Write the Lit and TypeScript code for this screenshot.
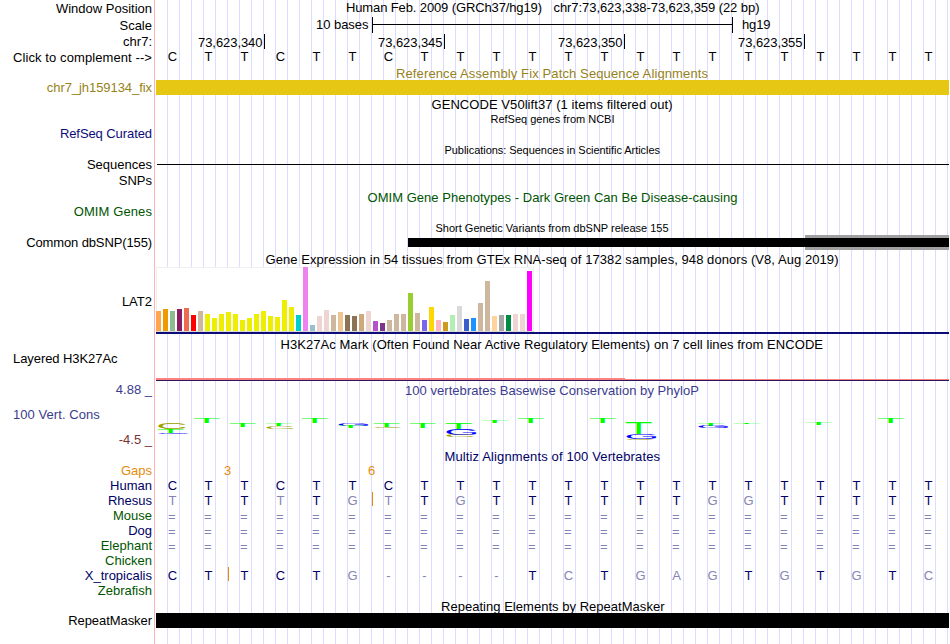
import { LitElement, html, svg, css, nothing, TemplateResult } from "lit";
import { customElement } from "lit/decorators.js";
import { classMap } from "lit/directives/class-map.js";
import { styleMap } from "lit/directives/style-map.js";

interface Title {
  text: string;
  from: number;
  to: number;
  base: number;
  small?: boolean;
}

interface Row {
  h: number;
  label?: string;
  tone?: string;
  dy?: number;
  left?: boolean;
  spacing?: number;
  titles?: Title[];
  body?: TemplateResult | TemplateResult[];
}

const STEP = 36;
const HUMAN = "CTTCTTCTTTTTTTTTTTTTTT";
const RHESUS = "TTTTTGTTGTTTTTTGGTTTTT";
const FROG = "CTTCTG----TCTGAGTGTGTC";
const UNALIGNED = "=".repeat(22);

const bases = (seq: string, base: number, compare = false) =>
  [...seq].map((ch, i) => {
    const off = compare && ch !== HUMAN[i];
    return svg`<text
      class=${classMap({ base: true, match: compare && !off, miss: off })}
      x=${(ch === "=" ? 171.8 : 172.5) + i * STEP} y=${base}>${ch}</text>`;
  });

const rect = (x: number, y: number, w: number, h: number, cls: string) =>
  svg`<rect class=${cls} x=${x} y=${y} width=${w} height=${h}></rect>`;

const t = (text: string, from: number, to: number, base: number, small = false): Title => ({
  text, from, to, base, small,
});

const TISSUES: [number, string][] = [
  [20, "#ffa54f"], [22, "#ee9a00"], [20, "#8fbc8f"], [22, "#8b1c62"], [23, "#ee6a50"],
  [16, "#ff0000"], [20, "#cdb79e"],
  ...[17, 13, 17, 19, 17, 11, 13, 17, 20, 15, 14, 31, 24].map((v): [number, string] => [v, "#eeee00"]),
  [16, "#00cdcd"], [64, "#ee82ee"], [6, "#9ac0cd"], [15, "#eed5d2"], [21, "#eed5d2"],
  [16, "#cdb79e"], [19, "#eec591"], [16, "#8b7355"], [15, "#8b7355"], [17, "#cdaa7d"],
  [20, "#eed5d2"], [10, "#b452cd"], [8, "#7a378b"], [11, "#cdb79e"], [17, "#cdb79e"],
  [17, "#cdb79e"], [38, "#9acd32"], [18, "#cdb79e"], [11, "#7a67ee"], [24, "#ffd700"],
  [11, "#ffb6c1"], [9, "#cd9b1d"], [16, "#b4eeb4"], [25, "#d9d9d9"], [12, "#3a5fcd"],
  [13, "#1e90ff"], [28, "#cdb79e"], [50, "#cdb79e"], [15, "#ffd39b"], [16, "#a6a6a6"],
  [16, "#008b45"], [17, "#eed5d2"], [17, "#eed5d2"], [60, "#ff00ff"],
];

/* Ink box of each logo letter in ems: left edge, width, overshoot below the baseline, height. */
const INK: Record<string, [number, number, number, number]> = {
  T: [0.021, 0.57, 0, 0.688],
  C: [0.05, 0.635, 0.01, 0.708],
  G: [0.05, 0.665, 0.01, 0.708],
};
const WIDTH: Record<string, number> = { T: 26, C: 27.5, G: 30 };
const OFFSET: Record<string, number> = { T: -14.2, C: -13.5, G: -13.5 };

/* Column, letter, top, bottom, measured from the top of the conservation row. */
const LOGO: [number, string, number, number][] = [
  [0, "C", 25.7, 32.3], [0, "T", 32, 36], [0, "G", 36, 37],
  [1, "T", 21, 26], [2, "T", 26, 30],
  [3, "T", 26, 29], [3, "C", 29, 32],
  [4, "T", 21, 26],
  [5, "G", 26, 29], [5, "T", 29, 31],
  [6, "T", 26, 30], [6, "C", 30, 31],
  [7, "T", 26, 31],
  [8, "T", 26, 32], [8, "G", 32, 38.3], [8, "C", 38, 40],
  [9, "T", 24, 26], [10, "T", 21, 26], [12, "T", 21, 26],
  [13, "T", 26, 37], [13, "G", 37, 42], [13, "C", 42, 43],
  [15, "T", 26, 29], [15, "G", 29, 31],
  [16, "T", 26, 27], [18, "T", 26, 28], [20, "T", 21, 26],
];

const logoLetter = ([col, ch, top, bottom]: [number, string, number, number]) => {
  const [l, w, over, h] = INK[ch];
  const sx = WIDTH[ch] / (w * 100);
  const sy = (bottom - top) / (h * 100);
  const x = 172 + col * STEP + OFFSET[ch] - l * 100 * sx;
  const y = bottom - over * 100 * sy;
  return svg`<text class="logo logo-${ch}" transform="translate(${x} ${y}) scale(${sx} ${sy})">${ch}</text>`;
};

const ROWS: Row[] = [
  { h: 17, label: "Window Position", dy: 1, titles: [
    t("Human Feb. 2009 (GRCh37/hg19)", 346, 542, 12),
    t("chr7:73,623,338-73,623,359 (22 bp)", 553.5, 759.5, 12),
  ] },
  { h: 17, label: "Scale", dy: 1,
    titles: [t("10 bases", 316, 368.5, 12), t("hg19", 742, 770.5, 12)],
    body: [rect(372, 7, 361, 1, "ink"), rect(372, 0, 1, 16, "ink"), rect(732, 0, 1, 16, "ink")] },
  { h: 15, label: "chr7:",
    titles: [340, 345, 350, 355].map((n, i) => t(`73,623,${n}`, 198 + i * 180, 262.5 + i * 180, 13)),
    body: [0, 1, 2, 3].map((i) => rect(264 + i * 180, 0, 1, 15, "ink")) },
  { h: 16, label: "Click to complement -->", dy: 1, spacing: 0.09, body: bases(HUMAN, 12) },
  { h: 15, tone: "gold", titles: [t("Reference Assembly Fix Patch Sequence Alignments", 396, 708, 13)] },
  { h: 15, label: "chr7_jh159134_fix", tone: "gold", spacing: -0.06, body: rect(156, 0, 793, 15, "patch") },
  { h: 16, titles: [t("GENCODE V50lift37 (1 items filtered out)", 431.5, 672.5, 14)] },
  { h: 14, titles: [t("RefSeq genes from NCBI", 490.5, 614.5, 12, true)] },
  { h: 16, label: "RefSeq Curated", tone: "blue", dy: 1, spacing: -0.08 },
  { h: 16, titles: [t("Publications: Sequences in Scientific Articles", 444.5, 660, 13, true)] },
  { h: 15, label: "Sequences", body: rect(157, 7, 792, 1, "ink") },
  { h: 17, label: "SNPs", dy: 1 },
  { h: 15, tone: "green", titles: [t("OMIM Gene Phenotypes - Dark Green Can Be Disease-causing", 367.5, 737.5, 13)] },
  { h: 15, label: "OMIM Genes", tone: "green", spacing: 0.1 },
  { h: 16, titles: [t("Short Genetic Variants from dbSNP release 155", 435.5, 668.5, 13, true)] },
  { h: 15, label: "Common dbSNP(155)", spacing: -0.12, body: [rect(805, 0, 144, 15, "shade"), rect(408, 3, 541, 9, "ink")] },
  { h: 16, titles: [t("Gene Expression in 54 tissues from GTEx RNA-seq of 17382 samples, 948 donors (V8, Aug 2019)", 265.5, 838.5, 14)] },
  { h: 70, label: "LAT2", dy: 28, body: [
    rect(156, 1, 378, 65, "frame"),
    rect(157, 2, 376, 63, "paper"),
    rect(156, 65, 378, 1, "floor"),
    ...TISSUES.map(([v, fill], i) => svg`<rect x=${156 + i * 7} y=${65 - v} width="5" height=${v} fill=${fill}></rect>`),
    rect(156, 66, 793, 2, "navy"),
  ] },
  { h: 15, titles: [t("H3K27Ac Mark (Often Found Near Active Regulatory Elements) on 7 cell lines from ENCODE", 280.5, 823, 13)] },
  { h: 31, label: "Layered H3K27Ac", left: true, spacing: -0.07, body: [
    rect(156, 27, 469, 2, "signal"), rect(625, 28, 324, 1, "signal"), rect(156, 29, 793, 1, "signal-base"),
  ] },
  { h: 15, label: "4.88 _", tone: "slate", titles: [t("100 vertebrates Basewise Conservation by PhyloP", 405, 699, 13)] },
  { h: 35, label: "100 Vert. Cons", tone: "slate", left: true, dy: 10, spacing: 0.06, body: LOGO.map(logoLetter) },
  { h: 16, label: "-4.5 _", tone: "rust" },
  { h: 15, tone: "deep", titles: [t("Multiz Alignments of 100 Vertebrates", 444.5, 660, 13)] },
  { h: 15, label: "Gaps", tone: "orange", titles: [t("3", 224, 231, 12), t("6", 368, 375, 12)] },
  { h: 15, label: "Human", tone: "deep", body: bases(HUMAN, 12, true) },
  { h: 15, label: "Rhesus", tone: "deep", body: [...bases(RHESUS, 12, true), rect(372, -1, 1, 14, "gap")] },
  { h: 15, label: "Mouse", tone: "green", body: bases(UNALIGNED, 13, true) },
  { h: 15, label: "Dog", tone: "deep", body: bases(UNALIGNED, 13, true) },
  { h: 15, label: "Elephant", tone: "green", body: bases(UNALIGNED, 13, true) },
  { h: 15, label: "Chicken", tone: "green" },
  { h: 15, label: "X_tropicalis", tone: "deep", body: [...bases(FROG, 12, true), rect(228, -1, 1, 14, "gap")] },
  { h: 15, label: "Zebrafish", tone: "green" },
  { h: 15, titles: [t("Repeating Elements by RepeatMasker", 441, 664.5, 13)] },
  { h: 15, label: "RepeatMasker", spacing: -0.06, body: rect(156, 0, 793, 15, "ink") },
];

@customElement("track-row")
class TrackRow extends LitElement {
  static properties = { row: { attribute: false } };
  declare row: Row;

  static styles = css`
    :host { display: block; }
    .row {
      display: grid;
      grid-template-columns: 155px 794px;
      height: var(--h);
      color: #000;
      font: 13px/15px "Liberation Sans", Arial, sans-serif;
    }
    .label {
      padding: var(--dy) 3px 0 13px;
      letter-spacing: var(--ls);
      text-align: right;
      white-space: nowrap;
    }
    .left { text-align: left; }
    .track { display: block; overflow: visible; }
    .gold { color: #968219; }
    .blue { color: #0c0c78; }
    .green { color: #005500; }
    .slate { color: #3c3c8c; }
    .rust { color: #783232; }
    .deep { color: #000064; }
    .orange { color: #e68a0a; }
    text { fill: currentColor; }
    rect { shape-rendering: crispEdges; }
    .small { font-size: 11px; }
    .base { text-anchor: middle; }
    .match { fill: #000064; }
    .miss { fill: #8484b4; }
    .ink { fill: #000; }
    .patch { fill: #e6c814; }
    .shade { fill: #a0a0a0; }
    .frame { fill: #f0f0f0; }
    .paper { fill: #fff; }
    .floor { fill: #d8d8d8; }
    .navy { fill: #0c0c78; }
    .signal { fill: #ff8080; }
    .signal-base { fill: #301458; }
    .gap { fill: #e68a0a; }
    .logo { font-size: 100px; }
    .logo-T { fill: #00ff00; }
    .logo-C { fill: #a0a000; }
    .logo-G { fill: #0000ff; }
  `;

  render() {
    const r = this.row;
    if (!r) return nothing;
    return html`<div
      class="row ${r.tone ?? ""}"
      style=${styleMap({ "--h": `${r.h}px`, "--dy": `${r.dy ?? 0}px`, "--ls": `${r.spacing ?? 0}px` })}
    >
      <div class=${classMap({ label: true, left: !!r.left })}>${r.label ?? nothing}</div>
      <svg class="track" width="794" height=${r.h} viewBox="155 0 794 ${r.h}">
        ${r.body ?? nothing}
        ${(r.titles ?? []).map((x) => svg`<text
          class=${classMap({ small: !!x.small })}
          x=${x.from} y=${x.base} textLength=${x.to - x.from}>${x.text}</text>`)}
      </svg>
    </div>`;
  }
}

@customElement("app-root")
class AppRoot extends LitElement {
  static styles = css`
    :host {
      display: block;
      width: 950px;
      height: 644px;
      overflow: hidden;
      background: #fff;
    }
    .browser {
      width: 949px;
      height: 644px;
      background:
        linear-gradient(#ffb4b4, #ffb4b4) 154px 0 / 1px 100% no-repeat,
        repeating-linear-gradient(90deg, #dcdcff 0 1px, transparent 1px 12px) 167px 0 / 792px 100% no-repeat;
    }
  `;

  render() {
    return html`<div class="browser">
      ${ROWS.map((r) => html`<track-row .row=${r}></track-row>`)}
    </div>`;
  }
}
